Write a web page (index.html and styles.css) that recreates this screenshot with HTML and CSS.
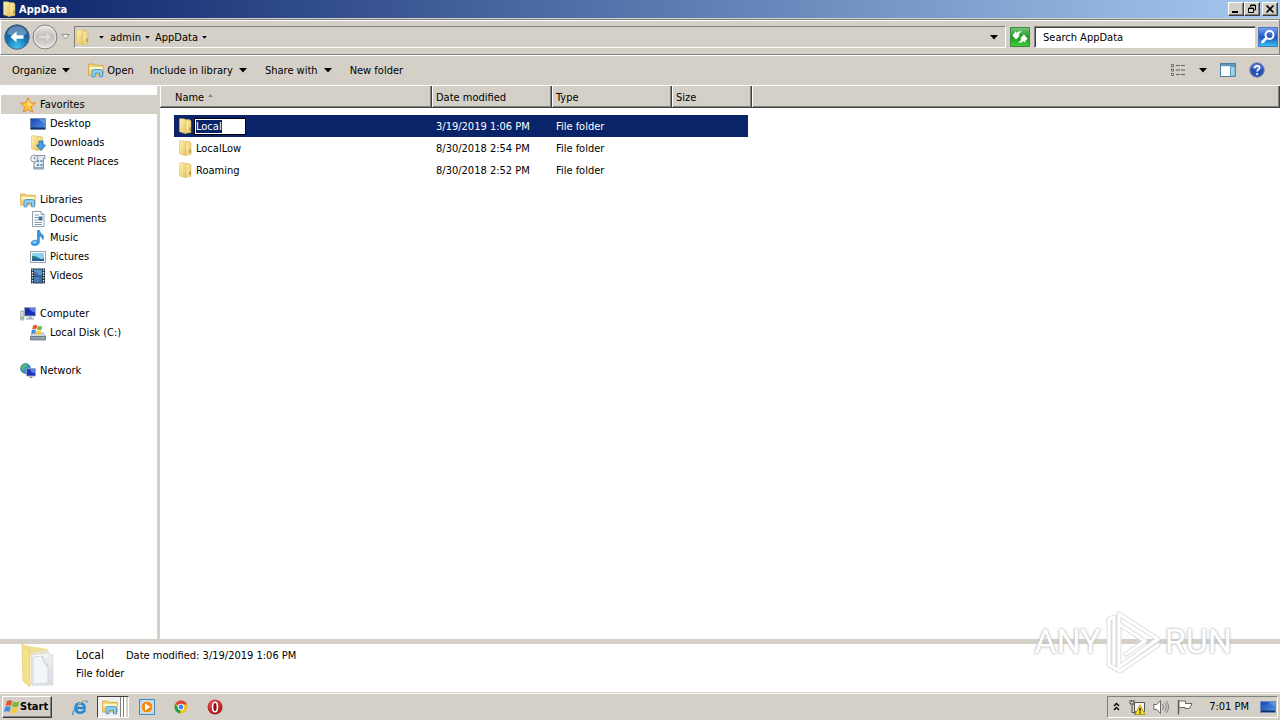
FILE: index.html
```html
<!DOCTYPE html>
<html lang="en">
<head>
<meta charset="utf-8">
<title>AppData</title>
<link rel="stylesheet" href="styles.css">
</head>
<body>
<svg class="sprite" aria-hidden="true">
  <defs>
    <linearGradient id="gold" x1="0" x2="1" y1="0" y2="1"><stop offset="0" stop-color="#fdf3b4"/><stop offset="1" stop-color="#e6c45e"/></linearGradient>
    <linearGradient id="screen" x1="0" x2="1" y1="0" y2="1"><stop offset="0" stop-color="#1a3fae"/><stop offset="1" stop-color="#4f9be6"/></linearGradient>
    <radialGradient id="orb" cx=".5" cy=".9" r=".9"><stop offset="0" stop-color="#3fc4f0"/><stop offset=".5" stop-color="#1673b4"/><stop offset="1" stop-color="#1b4a80"/></radialGradient>
    <linearGradient id="silver" x1="0" x2="0" y1="0" y2="1"><stop offset="0" stop-color="#e8e7e4"/><stop offset=".5" stop-color="#c2c0bc"/><stop offset="1" stop-color="#e4e3e0"/></linearGradient>
    <linearGradient id="green" x1="0" x2="0" y1="0" y2="1"><stop offset="0" stop-color="#7cc878"/><stop offset=".5" stop-color="#1f9a26"/><stop offset="1" stop-color="#42cf38"/></linearGradient>
    <linearGradient id="sky" x1="0" x2="0" y1="0" y2="1"><stop offset="0" stop-color="#7da6ec"/><stop offset=".5" stop-color="#1f52c4"/><stop offset="1" stop-color="#35c6ee"/></linearGradient>
    <radialGradient id="red" cx=".4" cy=".3" r=".8"><stop offset="0" stop-color="#f0585c"/><stop offset="1" stop-color="#9c0a12"/></radialGradient>
    <linearGradient id="paper" x1="0" x2="1" y1="0" y2="1"><stop offset="0" stop-color="#fff"/><stop offset="1" stop-color="#d6dbe0"/></linearGradient>
  </defs>
  <symbol id="folder" viewBox="0 0 16 16">
    <path d="M6 1.500h5.500l1.500 1.500v11.500l-6 .8z" fill="#efd983" stroke="#cfae4c" stroke-width=".5"/>
    <path d="M9 3v8" stroke="#fbf3c4" stroke-width="1.200"/>
    <path d="M1.500.8h4.800l1.700 1.700v13.300L1.500 13.800z" fill="url(#gold)" stroke="#d8ba5c" stroke-width=".5"/>
    <path d="M11 9.500h2v3.500h-2z" fill="#b7a25e"/>
  </symbol>
  <symbol id="library" viewBox="0 0 16 16">
    <path d="M.6 3V2h5l1 1.300h8.600V13H.6z" fill="#f3d872" stroke="#c79a35" stroke-width=".7"/>
    <path d="M1.400 5h13.200v2.500H1.400z" fill="#fdf6cc"/>
    <path d="M4 14.800V9.600q0-2 2-2h6.500q2 0 2 2v5.200h-3v-3.600H7v3.600z" fill="#8fd0f2" stroke="#3b88bd" stroke-width=".8"/>
  </symbol>
  <symbol id="star" viewBox="0 0 16 16">
    <path d="M8 .7l2.200 4.900 5.200.6-3.900 3.600 1.100 5.300L8 12.500l-4.600 2.600 1.100-5.300L.6 6.200l5.200-.6z" fill="#fbc53c" stroke="#e8852a" stroke-width=".9"/>
    <path d="M8 3l1.500 3.500 3.500.4L8 9z" fill="#ffe88c"/>
  </symbol>
  <symbol id="desktop" viewBox="0 0 16 16">
    <path d="M.5 2.500h15v11H.5z" fill="url(#screen)" stroke="#6c8db8"/>
    <path d="M1 11.500h14V13H1z" fill="#16305e"/>
    <path d="M9 3h6v4q-4 0-6-4z" fill="#7cb9f1" opacity=".5"/>
  </symbol>
  <symbol id="downarrow" viewBox="0 0 16 16">
    <path d="M9 6h4v4h2.500L11 15.500 6.500 10H9z" fill="#42a3ea" stroke="#1d68ac" stroke-width=".8"/>
  </symbol>
  <symbol id="recent" viewBox="0 0 16 16">
    <path d="M5 1.500h10v3h-1.500V15H4V6z" fill="#dfe9f2" stroke="#748799" stroke-width=".9"/>
    <path d="M7 6h2v2H7zM7 10h2v2H7zM10.500 6h2v2h-2zM10.500 10h2v2h-2z" fill="#5f93bd"/>
    <circle cx="4.200" cy="4.500" r="3.500" fill="#f4f8fa" stroke="#7d8c99" stroke-width=".9"/>
    <path d="M4.200 2.500v2.200h1.700" fill="none" stroke="#54697c" stroke-width=".8"/>
    <path d="M3 13h11v2H3z" fill="#93a9bb"/>
  </symbol>
  <symbol id="document" viewBox="0 0 16 16">
    <path d="M2.500.5H11L14 3.500v12H2.500z" fill="#fff" stroke="#8496a6" stroke-width=".9"/>
    <path d="M11 .5v3h3" fill="#dce6ee" stroke="#8496a6" stroke-width=".8"/>
    <path d="M4.500 4H9M4.500 6.500H8M4.500 9H8M4.500 11.500h7.500M4.500 13.500h7.500" stroke="#7b8e9e" stroke-width=".9"/>
    <path d="M8.500 5.500h4V9.500h-4z" fill="#3f6f9f"/>
  </symbol>
  <symbol id="music" viewBox="0 0 16 16">
    <path d="M7.500.5h2q.3 2.500 3 4.200 2 1.800.3 5Q12.500 6.500 9.300 6v6q0 3.300-4.300 3.500-4 0-3.800-2.500.5-2.700 4-2.800 1.400 0 2.300.5z" fill="#3a9ce2" stroke="#1b6bb2" stroke-width=".6"/>
    <ellipse cx="4.600" cy="12.300" rx="1.900" ry="1.200" fill="#8ed2fa"/>
  </symbol>
  <symbol id="picture" viewBox="0 0 16 16">
    <path d="M.5 2.500h15v11H.5z" fill="#fff" stroke="#8497a8" stroke-width=".9"/>
    <path d="M2 4h12v8H2z" fill="#8fd2f2"/>
    <path d="M2 7q4-.5 7 2t5-.5V12H2z" fill="#287b83"/>
    <path d="M2 10.300h12V12H2z" fill="#2859a5"/>
  </symbol>
  <symbol id="video" viewBox="0 0 16 16">
    <path d="M1 .5h14v15H1z" fill="#273748"/>
    <path d="M4 1.500h8v6H4z" fill="#4d99dc"/><path d="M4 8.500h8v6H4z" fill="#3d80c0"/>
    <path d="M4 5l2-1.500L8 6l-1 1.500H4zM9 11l3-1v3.500H9z" fill="#5d5f88"/>
    <path d="M2.500 1.500v14M13.500 1.500v14" stroke="#f3f6f8" stroke-width="1.300" stroke-dasharray="1.300 1.300"/>
  </symbol>
  <symbol id="computer" viewBox="0 0 16 16">
    <path d="M.8 5h3v9h-3z" fill="#d9dde0" stroke="#84909a" stroke-width=".7"/><path d="M1.500 11h1.500v1.500H1.500z" fill="#53ad43"/>
    <path d="M4.500 1.500h11v8.500h-11z" fill="#1c2fae" stroke="#9ea8b6"/>
    <path d="M9 2h6v4.500Q11 6 9 2z" fill="#5b7de8"/>
    <path d="M8.500 10.500h3v1.500h2.500v1.500H6V12h2.500z" fill="#a5adb5"/>
  </symbol>
  <symbol id="flag4" viewBox="0 0 16 16">
    <path d="M3 2Q5.500.3 8.300 2L7 7Q4.500 5.500 1.500 7z" fill="#e8532c"/>
    <path d="M9.200 2.400q2.800 1.500 6.300 0L14 7.500Q11 9 8 7.400z" fill="#7fb93c"/>
    <path d="M1.200 8Q4.200 6.500 6.700 8L5.400 13Q3 11.500 0 13z" fill="#3f8edc"/>
    <path d="M7.700 8.500q3 1.500 6 .1l-1.500 5q-3 1.400-5.900-.1z" fill="#f8c832"/>
  </symbol>
  <symbol id="disk" viewBox="0 0 16 16">
    <path d="M2.500 8h11l2 3.500H.5z" fill="#d2d9df" stroke="#7a8995" stroke-width=".6"/>
    <path d="M.5 11.500h15V15H.5z" fill="#8d9fac" stroke="#566875" stroke-width=".7"/><path d="M11.500 12.500h2.500v1h-2.500z" fill="#68e64e"/>
    <svg x="1" y="-1" width="12" height="12"><use href="#flag4"/></svg>
  </symbol>
  <symbol id="network" viewBox="0 0 16 16">
    <circle cx="5.500" cy="5.500" r="5" fill="#3a92d4" stroke="#23679f" stroke-width=".6"/>
    <path d="M2 2.500Q5 0 7.500 1.500L6 4 3.500 5 3 8Q.6 6 2 2.500zM7 6l3-1-1 4H6.500z" fill="#5ac05a"/>
    <path d="M6.500 5.500h9v7.500h-9z" fill="#1c35bb" stroke="#9ba7b4" stroke-width=".8"/><path d="M10 6h5v4q-4 0-5-4z" fill="#5c83ea"/>
    <path d="M9.500 13.500h3V15h-3z" fill="#8894a0"/>
  </symbol>
  <symbol id="down" viewBox="0 0 8 5"><path d="M0 0h8L4 4.500z" fill="#000"/></symbol>
</svg>

<div class="window">
  <header class="titlebar">
    <svg class="icon"><use href="#folder"/></svg>
    <h1 class="title">AppData</h1>
    <button class="caption" aria-label="Minimize"><svg viewBox="0 0 12 10"><path d="M2 7h6v2H2z"/></svg></button>
    <button class="caption" aria-label="Restore"><svg viewBox="0 0 12 10"><path d="M4.500 3V1h5v5H8M4 1.500h6M2.500 4h5v4.500h-5zM2 4.500h6" fill="none" stroke="#000"/></svg></button>
    <button class="caption close" aria-label="Close"><svg viewBox="0 0 12 10"><path d="M2.500 1.500l7 7M9.500 1.500l-7 7" fill="none" stroke="#000" stroke-width="1.700"/></svg></button>
  </header>

  <div class="navbar">
    <button class="round" aria-label="Back"><svg viewBox="0 0 26 26"><circle cx="13" cy="13" r="12.300" fill="url(#orb)" stroke="#4f6c88"/><path d="M3 10Q5 2 13 2t10 8q-10 4-20 0z" fill="#fff" opacity=".3"/><path d="M6.500 13l6-5.500v3.700h7v3.600h-7v3.700z" fill="#fff"/></svg></button>
    <button class="round" aria-label="Forward"><svg viewBox="0 0 26 26"><circle cx="13" cy="13" r="12" fill="url(#silver)" stroke="#85837f"/><circle cx="13" cy="13" r="10.500" fill="none" stroke="#f3f2f0" stroke-width=".8"/><path d="M19.500 13l-6-5.500v3.700h-7v3.600h7v3.700z" fill="#dedcd8" stroke="#b7b5b0" stroke-width=".6"/></svg></button>
    <button class="recent-pages" aria-label="Recent pages"><svg viewBox="0 0 9 6"><path d="M.7.500h7.600L4.500 5z" fill="#f4f2ee" stroke="#85837f" stroke-width=".8"/></svg></button>
    <div class="address">
      <svg class="icon"><use href="#folder"/></svg>
      <button class="crumb root" aria-label="Root folders"><svg class="tri"><use href="#down"/></svg></button>
      <button class="crumb">admin <svg class="tri"><use href="#down"/></svg></button>
      <button class="crumb">AppData <svg class="tri"><use href="#down"/></svg></button>
      <button class="history" aria-label="Previous locations"><svg class="tri wide"><use href="#down"/></svg></button>
    </div>
    <button class="square" aria-label="Refresh"><svg viewBox="0 0 20 20"><path d="M.5.500h19v19H.5z" fill="url(#green)" stroke="#3c8a44"/><path d="M2.500 8.500L6 4v2q3-2.500 6-1.500-3 1-3.500 4H10L6 12.500z" fill="#fff"/><path d="M17.500 11.500L14 16v-2q-3 2.500-6 1.500 3-1 3.500-4H10L14 7.500z" fill="#fff"/></svg></button>
    <input class="search" type="text" aria-label="Search AppData" placeholder="Search AppData">
    <button class="square" aria-label="Search"><svg viewBox="0 0 20 20"><path d="M.5.500h19v19H.5z" fill="url(#sky)" stroke="#4a75c0"/><circle cx="11.500" cy="8" r="4" fill="none" stroke="#fff" stroke-width="2"/><path d="M8.500 11L4.500 15" stroke="#fff" stroke-width="2.600" stroke-linecap="round"/></svg></button>
  </div>

  <div class="toolbar">
    <button class="tool organize">Organize <svg class="tri wide"><use href="#down"/></svg></button>
    <button class="tool open"><svg class="icon"><use href="#library"/></svg> Open</button>
    <button class="tool">Include in library <svg class="tri wide"><use href="#down"/></svg></button>
    <button class="tool">Share with <svg class="tri wide"><use href="#down"/></svg></button>
    <button class="tool">New folder</button>
    <div class="views">
      <button aria-label="Change your view"><svg class="icon" viewBox="0 0 16 16"><path d="M1.500 2.500h2v2h-2zM1.500 7h2v2h-2zM1.500 11.500h2v2h-2z" fill="#fff" stroke="#66645f"/><path d="M6 3.500h4M11 3.500h4M6 8h4M11 8h4M6 12.500h4M11 12.500h4" stroke="#606166"/></svg></button>
      <button aria-label="More options"><svg class="tri wide"><use href="#down"/></svg></button>
      <button aria-label="Show the preview pane"><svg class="icon" viewBox="0 0 16 16"><path d="M.5 1.500h15v13H.5z" fill="#fff" stroke="#4a7ca0"/><path d="M1 2h14v2.200H1z" fill="#6298bd"/><path d="M10.500 4.500H15V14h-4.500z" fill="#9fd5ee" stroke="#5c9abb"/></svg></button>
      <button aria-label="Help"><svg class="icon" viewBox="0 0 16 16"><circle cx="8" cy="8" r="7.300" fill="#2b50b6" stroke="#8393b8"/><path d="M2.500 6Q4 2 8 2t5.500 4Q8 8 2.500 6z" fill="#7f9de0" opacity=".6"/><path d="M5.600 6.300q.1-2.500 2.500-2.500t2.400 2.100q0 1.200-1.300 1.900-1 .6-1 1.800" fill="none" stroke="#fff" stroke-width="1.700"/><circle cx="8.100" cy="12" r="1.100" fill="#fff"/></svg></button>
    </div>
  </div>

  <main class="body">
    <nav class="tree" aria-label="Folders">
      <section class="group">
        <a class="node top current" href="#favorites"><svg class="icon"><use href="#star"/></svg>Favorites</a>
        <a class="node" href="#desktop-place"><svg class="icon"><use href="#desktop"/></svg>Desktop</a>
        <a class="node" href="#downloads"><svg class="icon"><use href="#folder"/><use href="#downarrow"/></svg>Downloads</a>
        <a class="node" href="#recent-places"><svg class="icon"><use href="#recent"/></svg>Recent Places</a>
      </section>
      <section class="group">
        <a class="node top" href="#libraries"><svg class="icon"><use href="#library"/></svg>Libraries</a>
        <a class="node" href="#documents"><svg class="icon"><use href="#document"/></svg>Documents</a>
        <a class="node" href="#music-library"><svg class="icon"><use href="#music"/></svg>Music</a>
        <a class="node" href="#pictures"><svg class="icon"><use href="#picture"/></svg>Pictures</a>
        <a class="node" href="#videos"><svg class="icon"><use href="#video"/></svg>Videos</a>
      </section>
      <section class="group">
        <a class="node top" href="#computer-place"><svg class="icon"><use href="#computer"/></svg>Computer</a>
        <a class="node" href="#local-disk"><svg class="icon"><use href="#disk"/></svg>Local Disk (C:)</a>
      </section>
      <section class="group">
        <a class="node top" href="#network-place"><svg class="icon"><use href="#network"/></svg>Network</a>
      </section>
    </nav>
    <div class="files">
      <table class="list">
        <colgroup><col class="c-gutter"><col class="c-name"><col class="c-date"><col class="c-type"><col class="c-size"><col></colgroup>
        <thead>
          <tr><th class="first" colspan="2">Name <svg class="sort" viewBox="0 0 5 3"><path d="M0 3L2.500 0 5 3z" fill="#8a8780"/></svg></th><th>Date modified</th><th>Type</th><th>Size</th><th></th></tr>
        </thead>
        <tbody>
          <tr class="spacer"><td colspan="6"></td></tr>
          <tr class="selected"><td></td><td><div class="file"><svg class="icon"><use href="#folder"/></svg><input class="rename" id="rename" type="text" value="Local" aria-label="Folder name"></div></td><td>3/19/2019 1:06 PM</td><td>File folder</td><td class="size"></td><td></td></tr>
          <tr><td></td><td><div class="file"><svg class="icon"><use href="#folder"/></svg><span>LocalLow</span></div></td><td>8/30/2018 2:54 PM</td><td>File folder</td><td></td><td></td></tr>
          <tr><td></td><td><div class="file"><svg class="icon"><use href="#folder"/></svg><span>Roaming</span></div></td><td>8/30/2018 2:52 PM</td><td>File folder</td><td></td><td></td></tr>
        </tbody>
      </table>
    </div>
  </main>

  <footer class="details">
    <svg class="preview" viewBox="0 0 36 48">
      <path d="M3 1l25 4v6l-16 2z" fill="#efdf94"/>
      <path d="M11 9l17-3 1 2v32l-18 1z" fill="#e6e2cf"/>
      <path d="M12 11l15-2 6 2v30l-21 1z" fill="url(#paper)" stroke="#d5d8dc" stroke-width=".6"/>
      <path d="M13 13l9-1q5 4 6 11v16l-15 1z" fill="#f4f5f6" stroke="#c3c8cd" stroke-width=".6"/>
      <path d="M22 12q1 7 6 11" fill="none" stroke="#b5bbc1" stroke-width=".8"/>
      <path d="M2 0l8 7v36L3 37z" fill="#f4e18b" stroke="#e2c964" stroke-width=".7"/>
    </svg>
    <div class="facts">
      <div class="fact-row"><span class="item-name">Local</span><span>Date modified: 3/19/2019 1:06 PM</span></div>
      <div>File folder</div>
    </div>
    <div class="watermark">
      <span>ANY</span>
      <svg viewBox="0 0 58 64"><g fill="none" stroke-linejoin="round" stroke-linecap="round"><path d="M5 10v46l11 6 38-26M5 10l5-2v47M15 5v46M15 5l39 25-39 28V15l26 17-19 13" stroke="#ddd" stroke-width="5"/><path d="M5 10v46l11 6 38-26M5 10l5-2v47M15 5v46M15 5l39 25-39 28V15l26 17-19 13" stroke="#fff" stroke-width="3"/></g></svg>
      <span>RUN</span>
    </div>
  </footer>
</div>

<div class="taskbar">
  <button class="start"><svg class="icon"><use href="#flag4"/></svg>Start</button>
  <button class="task" aria-label="Internet Explorer"><svg class="icon" viewBox="0 0 16 16"><path d="M12.800 10.800Q11.500 13.800 8.200 13.800 3.600 13.500 3.600 9t4.600-4.800q4.300.3 4.400 4.800H4.500" fill="none" stroke="#2286d0" stroke-width="2.600"/><path d="M2 15Q-.5 16.500 1.500 12 5 5.500 11 2.500q4.500-2 4 1.500" fill="none" stroke="#3a9ce0" stroke-width="1.200"/><path d="M6 5.500q5-4 8-4" fill="none" stroke="#e6c040"/></svg></button>
  <button class="task active" aria-label="Windows Explorer"><svg class="icon"><use href="#library"/></svg></button>
  <button class="task" aria-label="Windows Media Player"><svg class="icon" viewBox="0 0 16 16"><path d="M.5.500h15v15H.5z" fill="#b7dbf6" stroke="#4389bd"/><circle cx="8" cy="8" r="6" fill="#f28c16" stroke="#fff" stroke-width=".7"/><path d="M6 4.500L11.500 8 6 11.500z" fill="#fff"/></svg></button>
  <button class="task" aria-label="Google Chrome"><svg class="icon" viewBox="0 0 16 16"><circle cx="8" cy="8" r="6.500" fill="#f3c420"/><path d="M8 8L2.400 4.700A6.500 6.500 0 0 1 14 5.500H8z" fill="#dc4437"/><path d="M8 8l-1 6.400A6.500 6.500 0 0 1 2.400 4.700L5 9z" fill="#1d9d58"/><circle cx="8" cy="8" r="3.200" fill="#fff"/><circle cx="8" cy="8" r="2.400" fill="#4486ef"/></svg></button>
  <button class="task" aria-label="Opera"><svg class="icon" viewBox="0 0 16 16"><circle cx="8" cy="8" r="7.500" fill="url(#red)"/><ellipse cx="8" cy="8" rx="2.400" ry="4.800" fill="#8f0a10" stroke="#fff" stroke-width="1.600"/></svg></button>
  <div class="tray">
    <button aria-label="Show hidden icons"><svg class="chevrons" viewBox="0 0 8 10"><path d="M1 4l2.500-2.500L6 4M1 8l2.500-2.500L6 8" fill="none" stroke="#000" stroke-width="1.400"/></svg></button>
    <button aria-label="Network status"><svg class="icon" viewBox="0 0 16 16"><path d="M5.500 3.500h10v9h-10z" fill="#f4f3ef" stroke="#55534f"/><path d="M1 1v4h4V1M3 5v8.500h6M2.500 1v2M4 1v2M5 15h5" fill="none" stroke="#55534f"/><path d="M11 6l5 9.500H6z" fill="#fbe02c" stroke="#a6890c" stroke-width=".8"/><path d="M11 9v3.500M11 13.300v1.200" stroke="#000" stroke-width="1.300"/></svg></button>
    <button aria-label="Volume"><svg class="icon" viewBox="0 0 16 16"><path d="M.8 5.500h3L7.500 1.500v13L3.800 10.500h-3z" fill="#fff" stroke="#5d5b57" stroke-width=".9"/><path d="M9.500 5q2 3 0 6M11.500 3.500q3.500 4.500 0 9M13.500 2q4 6 0 12" fill="none" stroke="#77756f" stroke-width=".9"/></svg></button>
    <button aria-label="Action Center"><svg class="icon" viewBox="0 0 16 16"><path d="M1.500 1v14.500" stroke="#5d5b57" stroke-width="1.400"/><path d="M2 2h6.500v2.500H15L12.500 9.500H8V8.500H2z" fill="#fff" stroke="#5d5b57" stroke-width=".9"/></svg></button>
    <time class="clock">7:01 PM</time>
    <button aria-label="Show desktop"><svg class="icon"><use href="#desktop"/></svg></button>
  </div>
</div>
<script src="script.js"></script>
</body>
</html>
```
FILE: styles.css
```css
* { box-sizing: border-box; }

body {
  margin: 0;
  height: 100vh;
  display: flex;
  flex-direction: column;
  overflow: hidden;
  background: #d4d0c8;
  color: #000;
  font: 11px/15px "DejaVu Sans Condensed", "DejaVu Sans", sans-serif;
}

button, input { font: inherit; color: inherit; }

button {
  display: inline-flex;
  align-items: center;
  padding: 0;
  border: 0;
  background: none;
  white-space: nowrap;
}

a { color: inherit; text-decoration: none; }

.sprite { position: absolute; width: 0; height: 0; }
.icon { width: 16px; height: 16px; flex: none; }
.tri { width: 5px; height: 3px; flex: none; }
.tri.wide { width: 8px; height: 5px; }

.window { flex: 1; min-height: 0; display: flex; flex-direction: column; }

/* Title bar */
.titlebar {
  height: 18px;
  flex: none;
  display: flex;
  align-items: center;
  padding: 0 2px;
  background: linear-gradient(90deg, #0a246a, #a6caf0);
  color: #fff;
}
.title {
  margin: 0 auto 0 1px;
  font-size: 11px;
  font-weight: bold;
}
.caption {
  width: 16px;
  height: 14px;
  justify-content: center;
  background: #d4d0c8;
  border: 1px solid;
  border-color: #fff #404040 #404040 #fff;
  box-shadow: inset -1px -1px #808080;
}
.caption svg { width: 12px; height: 10px; flex: none; }
.close { margin-left: 2px; }

/* Address row */
.navbar {
  height: 36px;
  flex: none;
  display: flex;
  align-items: center;
  gap: 2px;
  margin-top: 1px;
  padding: 0 1px 0 3px;
  border: 1px solid;
  border-color: #808080 #808080 #808080 #fff;
  box-shadow: inset 0 1px #fff, 0 1px #fff;
}
.round svg { width: 26px; height: 26px; }
.recent-pages { width: 10px; justify-content: center; }
.recent-pages svg { width: 9px; height: 6px; }
.address {
  flex: 1;
  height: 22px;
  display: flex;
  align-items: center;
  margin-left: 2px;
  border: 1px solid;
  border-color: #808080 #fff #fff #808080;
}
.crumb { gap: 4px; margin-right: 5px; }
.crumb.root { margin: 0 6px 0 8px; }
.history { margin: 0 7px 0 auto; }
.square { margin-left: 2px; }
.square svg { width: 20px; height: 20px; }
.search {
  width: 222px;
  height: 22px;
  margin-left: 2px;
  padding: 0 8px;
  border: 1px solid;
  border-color: #808080 #d4d0c8 #fff #808080;
  box-shadow: inset 1px 1px #404040;
  background: #fff;
}
.search::placeholder { color: #000; opacity: 1; }
.search + .square { margin-left: 0; }

/* Command bar */
.toolbar {
  height: 30px;
  flex: none;
  display: flex;
  align-items: center;
  padding: 0 15px 0 12px;
}
.tool { gap: 6px; margin-right: 18px; }
.tool.open { gap: 3px; margin-right: 16px; }
.views { display: flex; gap: 13px; margin-left: auto; }

/* Main area */
.body {
  flex: 1;
  min-height: 0;
  display: flex;
  border-top: 1px solid #fff;
  background: #fff;
}
.tree {
  width: 160px;
  flex: none;
  padding: 9px 0 0 1px;
  border-right: 3px solid #d4d0c8;
}
.group { margin-bottom: 19px; }
.node {
  height: 19px;
  display: flex;
  align-items: center;
  gap: 4px;
  padding-left: 29px;
  white-space: nowrap;
}
.node.top { padding-left: 19px; }
.node.current { background: #d4d0c8; }

.files { flex: 1; min-width: 0; }
.list { width: 100%; table-layout: fixed; border-collapse: separate; border-spacing: 0; }
.c-gutter { width: 14px; }
.c-name { width: 258px; }
.c-date, .c-type { width: 120px; }
.c-size { width: 80px; }
.list th {
  height: 22px;
  padding: 2px 4px 0;
  text-align: left;
  font-weight: normal;
  background: #d4d0c8;
  border-right: 1px solid #404040;
  border-bottom: 1px solid #404040;
  box-shadow: inset 1px 0 #fff, inset -1px -1px #808080;
}
.list th.first { padding-left: 15px; }
.sort { width: 5px; height: 3px; margin: 0 0 4px 1px; }
.list td { height: 22px; padding: 0 4px; white-space: nowrap; }
.list .spacer td { height: 7px; padding: 0; }
.selected td { color: #fff; }
.selected td:not(:first-child):not(:last-child) { background: #0a246a; }
.list .selected td.size { padding: 0 4px 0 0; background-clip: content-box; }
.file { display: flex; align-items: center; }
.file span { padding-left: 2px; }
.rename {
  width: 52px;
  height: 17px;
  padding: 0 1px;
  border: 1px solid #000;
  outline: 0;
  background: #fff;
  color: #000;
}
.rename::selection { background: #0a246a; color: #fff; }

/* Details pane */
.details {
  position: relative;
  flex: none;
  height: 54px;
  display: flex;
  align-items: flex-start;
  gap: 20px;
  padding-left: 20px;
  border-top: 5px solid #d4d0c8;
  border-bottom: 1px solid #d4d0c8;
  background: #fff;
}
.preview { width: 36px; height: 48px; }
.facts { display: grid; row-gap: 3px; padding-top: 4px; }
.fact-row { display: flex; align-items: baseline; gap: 22px; }
.item-name { font-size: 12px; }
.watermark {
  position: absolute;
  right: 48px;
  bottom: 19px;
  display: flex;
  align-items: center;
  gap: 3px;
  color: #fff;
  font: 34px/64px Roboto, "Liberation Sans", sans-serif;
  text-shadow: 0 0 2px #bbb, 0 0 3px #bbb;
}
.watermark svg { width: 58px; height: 64px; }

/* Taskbar */
.taskbar {
  height: 27px;
  flex: none;
  display: flex;
  align-items: center;
  padding: 0 2px 1px;
  border-top: 1px solid #fff;
}
.start {
  height: 22px;
  margin-right: 20px;
  padding: 0 3px 0 1px;
  border: 1px solid;
  border-color: #fff #404040 #404040 #fff;
  box-shadow: inset -1px -1px #808080;
  font-weight: bold;
}
.task { margin-right: 18px; }
.task.active {
  height: 22px;
  margin: 0 10px 0 -9px;
  padding: 0 10px 0 4px;
  border: 1px solid;
  border-color: #404040 #fff #fff #404040;
  background: linear-gradient(90deg, #f3f1ed 22px, #808080 22px 23px, #fff 23px 25px, #808080 25px 26px, #fff 26px 28px, #d4d0c8 28px);
}
.tray {
  height: 22px;
  display: flex;
  align-items: center;
  gap: 8px;
  margin-left: auto;
  padding: 0 1px 0 5px;
  border: 1px solid;
  border-color: #808080 #fff #fff #808080;
}
.chevrons { width: 8px; height: 10px; }
.clock { margin: 0 3px 0 8px; }
```
FILE: script.js
```js
const rename = document.getElementById("rename");
rename.focus();
rename.select();
```
